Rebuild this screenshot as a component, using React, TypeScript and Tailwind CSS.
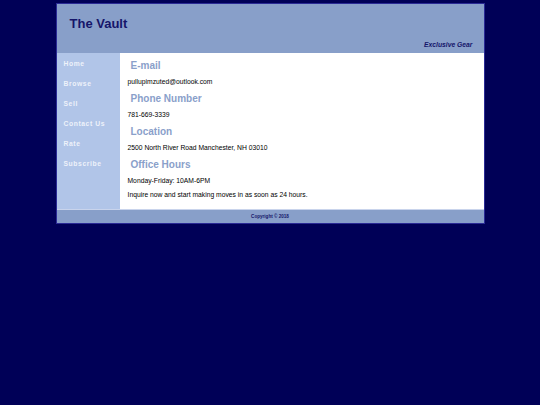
export default function App() {
  const nav = ["Home", "Browse", "Sell", "Contact Us", "Rate", "Subscribe"];

  return (
    <div className="min-h-[405px] bg-[#000057] pt-[3px] font-['Liberation_Sans',Arial,sans-serif]">
      <div className="mx-auto w-[429px] border border-[#2a2a95]">
        {/* header */}
        <div className="bg-[#889fc9] pb-[4px] pl-[13px] pr-[11px] pt-[13px]">
          <h1 className="text-[13px] font-bold leading-[14px] text-[#15156a]">The Vault</h1>
          <p className="mt-[10px] text-right text-[6.75px] font-bold italic leading-[8px] text-[#15156a]">
            Exclusive Gear
          </p>
        </div>

        <div className="flex">
          {/* sidebar */}
          <ul className="w-[63px] shrink-0 bg-[#b1c5e8] pl-[7px] pt-[7px]">
            {nav.map((n) => (
              <li key={n} className="h-[20px] text-[6.75px] font-bold leading-[8px] tracking-[0.6px] text-[#eef2fa]">
                {n}
              </li>
            ))}
          </ul>

          {/* content */}
          <div className="flex-1 bg-white pb-[10px] pl-[8px] pt-[7px] text-[6.75px] leading-[8px] text-black">
            <h2 className="pl-[3px] text-[10px] font-bold leading-[12px] text-[#8aa0ca]">E-mail</h2>
            <p className="mt-[6px]">pullupimzuted@outlook.com</p>

            <h2 className="mt-[7px] pl-[3px] text-[10px] font-bold leading-[12px] text-[#8aa0ca]">Phone Number</h2>
            <p className="mt-[6px]">781-669-3339</p>

            <h2 className="mt-[7px] pl-[3px] text-[10px] font-bold leading-[12px] text-[#8aa0ca]">Location</h2>
            <p className="mt-[6px]">2500 North River Road Manchester, NH 03010</p>

            <h2 className="mt-[7px] pl-[3px] text-[10px] font-bold leading-[12px] text-[#8aa0ca]">Office Hours</h2>
            <p className="mt-[6px]">Monday-Friday: 10AM-6PM</p>
            <p className="mt-[6px]">Inquire now and start making moves in as soon as 24 hours.</p>
          </div>
        </div>

        {/* footer */}
        <div className="border-t border-[#c9d4ec] bg-[#889fc9] py-[4px] text-center text-[4.6px] font-bold leading-[5px] text-[#15156a]">
          Copyright © 2018
        </div>
      </div>
    </div>
  );
}
